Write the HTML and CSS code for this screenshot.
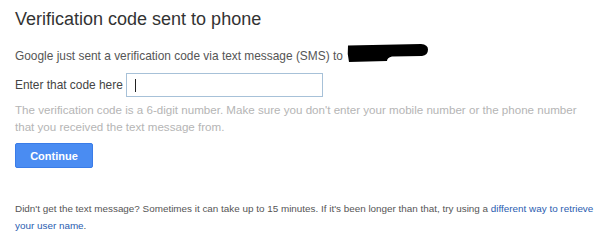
FILE: index.html
```html
<!DOCTYPE html>
<html>
<head>
<meta charset="utf-8">
<link rel="stylesheet" href="styles.css">
</head>
<body>
<div class="page">
  <h1 class="title">Verification code sent to phone</h1>
  <p class="intro">Google just sent a verification code via text message (SMS) to <svg class="redact" width="81" height="18" viewBox="0 0 81 18"><path d="M1,1.5 L74,0 Q81,0.5 81,5.5 Q81,11 75,12 L45,12.5 Q40,13.5 40,17 L2,18 Q0,10 1,1.5 Z" fill="#000"/></svg></p>
  <div class="field">
    <label class="label" for="code">Enter that code here</label>
    <div class="input"><span class="caret"></span></div>
  </div>
  <p class="help">The verification code is a 6-digit number. Make sure you don't enter your mobile number or the phone number that you received the text message from.</p>
  <button class="btn">Continue</button>
  <p class="foot">Didn't get the text message? Sometimes it can take up to 15 minutes. If it's been longer than that, try using a <a class="link" href="#">different way to retrieve your user name</a>.</p>
</div>
</body>
</html>
```
FILE: styles.css
```css
html, body { margin: 0; padding: 0; background: #fff; }
body { font-family: "Liberation Sans", Arial, sans-serif; }
.page { padding: 8px 0 0 15px; width: 585px; }
.title { margin: 0; font-weight: normal; font-size: 18px; line-height: 22px; color: #333; }
.intro { margin: 18px 0 0; font-size: 11.9px; line-height: 17px; color: #555; display: flex; align-items: flex-start; }
.redact { display: block; margin: -4px 0 -4px 4px; }
.field { display: flex; align-items: center; margin-top: 8px; gap: 3px; }
.label { font-size: 11.9px; color: #444; }
.input { width: 187px; height: 22px; border: 1px solid #a7c1d8; box-sizing: content-box; display: flex; align-items: center; padding-left: 8px; }
.caret { width: 1px; height: 13px; background: #222; }
.help { margin: 4px 0 0; font-size: 11.6px; line-height: 17px; color: #b5b5b5; width: 575px; }
.btn { margin-top: 8px; width: 78px; height: 25px; border: 1px solid #3a7ce8; border-radius: 2px; background: #4a8cf2; color: #fff; font-family: inherit; font-weight: bold; font-size: 11px; padding: 0; display: block; }
.foot { margin: 32px 0 0; font-size: 9.9px; line-height: 17px; color: #555; }
.link { color: #2a5db0; text-decoration: none; }
```
